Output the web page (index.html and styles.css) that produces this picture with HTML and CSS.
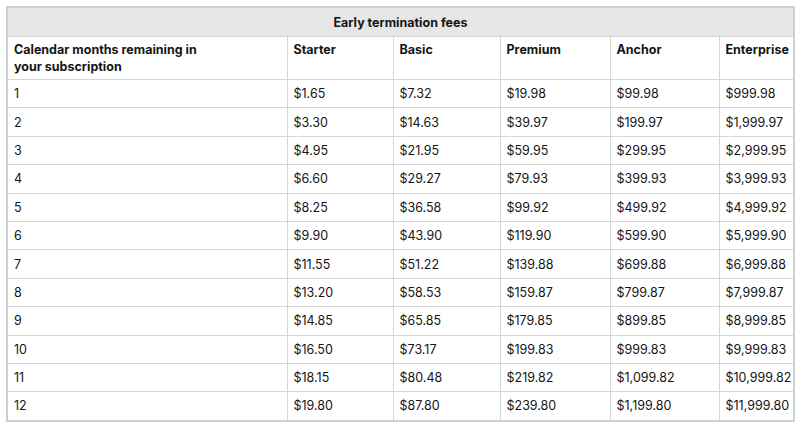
FILE: index.html
```html
<!DOCTYPE html>
<html>
<head>
<meta charset="utf-8">
<link rel="stylesheet" href="styles.css">
</head>
<body>
<table class="fees">
  <colgroup>
    <col class="c-months">
    <col class="c-starter">
    <col class="c-basic">
    <col class="c-premium">
    <col class="c-anchor">
    <col class="c-enterprise">
  </colgroup>
  <thead>
    <tr class="title-row"><th colspan="6">Early termination fees</th></tr>
    <tr class="head-row">
      <th><span class="wrap">Calendar months remaining in your subscription</span></th>
      <th>Starter</th>
      <th>Basic</th>
      <th>Premium</th>
      <th>Anchor</th>
      <th>Enterprise</th>
    </tr>
  </thead>
  <tbody>
    <tr><td>1</td><td>$1.65</td><td>$7.32</td><td>$19.98</td><td>$99.98</td><td>$999.98</td></tr>
    <tr><td>2</td><td>$3.30</td><td>$14.63</td><td>$39.97</td><td>$199.97</td><td>$1,999.97</td></tr>
    <tr><td>3</td><td>$4.95</td><td>$21.95</td><td>$59.95</td><td>$299.95</td><td>$2,999.95</td></tr>
    <tr><td>4</td><td>$6.60</td><td>$29.27</td><td>$79.93</td><td>$399.93</td><td>$3,999.93</td></tr>
    <tr><td>5</td><td>$8.25</td><td>$36.58</td><td>$99.92</td><td>$499.92</td><td>$4,999.92</td></tr>
    <tr><td>6</td><td>$9.90</td><td>$43.90</td><td>$119.90</td><td>$599.90</td><td>$5,999.90</td></tr>
    <tr><td>7</td><td>$11.55</td><td>$51.22</td><td>$139.88</td><td>$699.88</td><td>$6,999.88</td></tr>
    <tr><td>8</td><td>$13.20</td><td>$58.53</td><td>$159.87</td><td>$799.87</td><td>$7,999.87</td></tr>
    <tr><td>9</td><td>$14.85</td><td>$65.85</td><td>$179.85</td><td>$899.85</td><td>$8,999.85</td></tr>
    <tr><td>10</td><td>$16.50</td><td>$73.17</td><td>$199.83</td><td>$999.83</td><td>$9,999.83</td></tr>
    <tr><td>11</td><td>$18.15</td><td>$80.48</td><td>$219.82</td><td>$1,099.82</td><td>$10,999.82</td></tr>
    <tr><td>12</td><td>$19.80</td><td>$87.80</td><td>$239.80</td><td>$1,199.80</td><td>$11,999.80</td></tr>
  </tbody>
</table>
</body>
</html>
```
FILE: styles.css
```css
html, body {
  margin: 0;
  padding: 0;
  background: #ffffff;
}
body {
  padding: 6px;
  font-family: Inter, "Liberation Sans", sans-serif;
  font-size: 12.5px;
  color: #151515;
}
.fees {
  border-collapse: collapse;
  table-layout: fixed;
  width: 787px;
  border: 2px solid #cfcfcf;
}
.c-months { width: 280px; }
.c-starter { width: 106px; }
.c-basic { width: 107px; }
.c-premium { width: 110px; }
.c-anchor { width: 109px; }
.c-enterprise { width: 75px; }
.fees th, .fees td {
  border: 1px solid #d6d6d6;
  padding: 0 6px;
  text-align: left;
  line-height: 17px;
}
.title-row th {
  background: #e6e6e6;
  text-align: center;
  height: 28px;
  font-weight: 700;
}
.head-row th {
  vertical-align: top;
  padding-top: 4px;
  height: 38px;
  font-weight: 700;
}
.wrap {
  display: block;
  max-width: 190px;
}
.fees td {
  height: 27.4px;
  font-weight: 400;
}
```
